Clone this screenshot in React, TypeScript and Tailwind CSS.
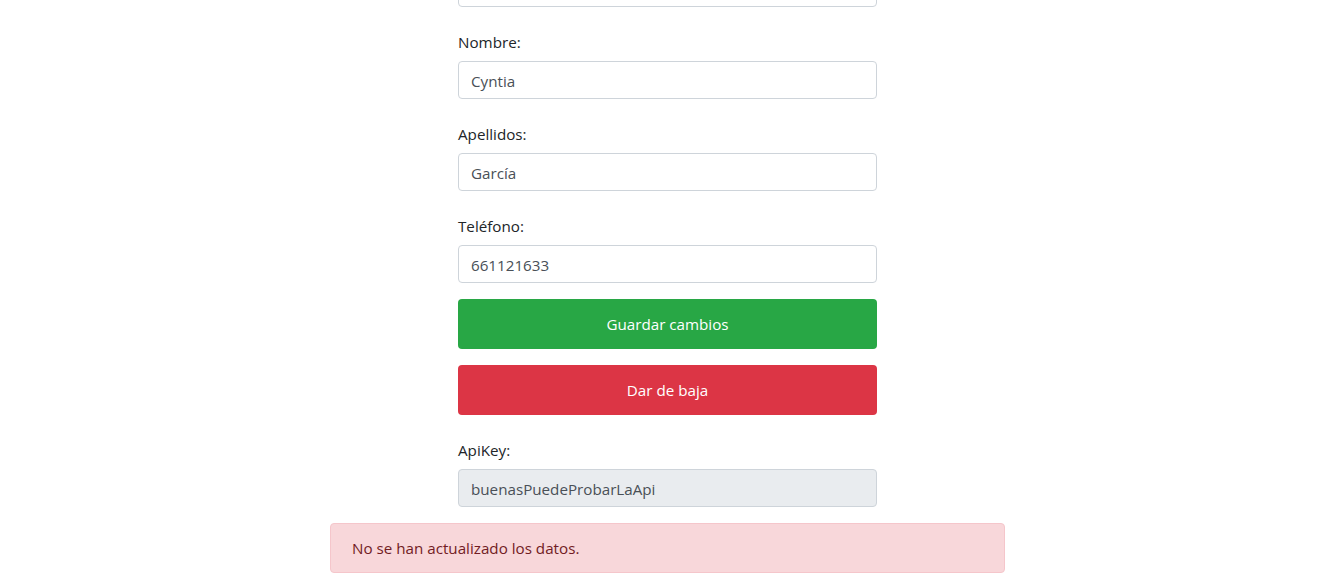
import React from "react";

const font = { fontFamily: '"Segoe UI", "Open Sans", "Noto Sans", sans-serif' };

const Field = ({ label, value, disabled }: { label?: string; value: string; disabled?: boolean }) => (
  <div className="flex flex-col">
    {label ? <label className="mb-[7px] text-[15.2px] leading-6 text-[#212529]">{label}</label> : null}
    <input
      readOnly
      value={value}
      disabled={disabled}
      className={`h-[38px] w-full rounded border border-[#ced4da] px-3 pt-[2px] text-[15.2px] text-[#495057] outline-none ${
        disabled ? "bg-[#e9ecef]" : "bg-white"
      }`}
    />
  </div>
);

export default function App() {
  return (
    <div className="flex min-h-[587px] justify-center bg-white pr-[5px]" style={font}>
      <div className="flex w-[675px] flex-col">
        <div className="mx-auto flex w-[419px] flex-col">
          <div className="-mt-[31px]">
            <Field value="" />
          </div>
          <div className="mt-[23px]">
            <Field label="Nombre:" value="Cyntia" />
          </div>
          <div className="mt-[23px]">
            <Field label="Apellidos:" value="García" />
          </div>
          <div className="mt-[23px]">
            <Field label="Teléfono:" value="661121633" />
          </div>
          <button className="mt-4 h-[50px] rounded bg-[#28a745] text-[15.2px] text-white">Guardar cambios</button>
          <button className="mt-4 h-[50px] rounded bg-[#dc3545] text-[15.2px] text-white">Dar de baja</button>
          <div className="mt-[23px]">
            <Field label="ApiKey:" value="buenasPuedeProbarLaApi" disabled />
          </div>
        </div>
        <div className="mt-4 flex h-[50px] items-center rounded border border-[#f5c6cb] bg-[#f8d7da] pl-[21px] pr-5 text-[15.2px] text-[#721c24]">
          No se han actualizado los datos.
        </div>
      </div>
    </div>
  );
}
